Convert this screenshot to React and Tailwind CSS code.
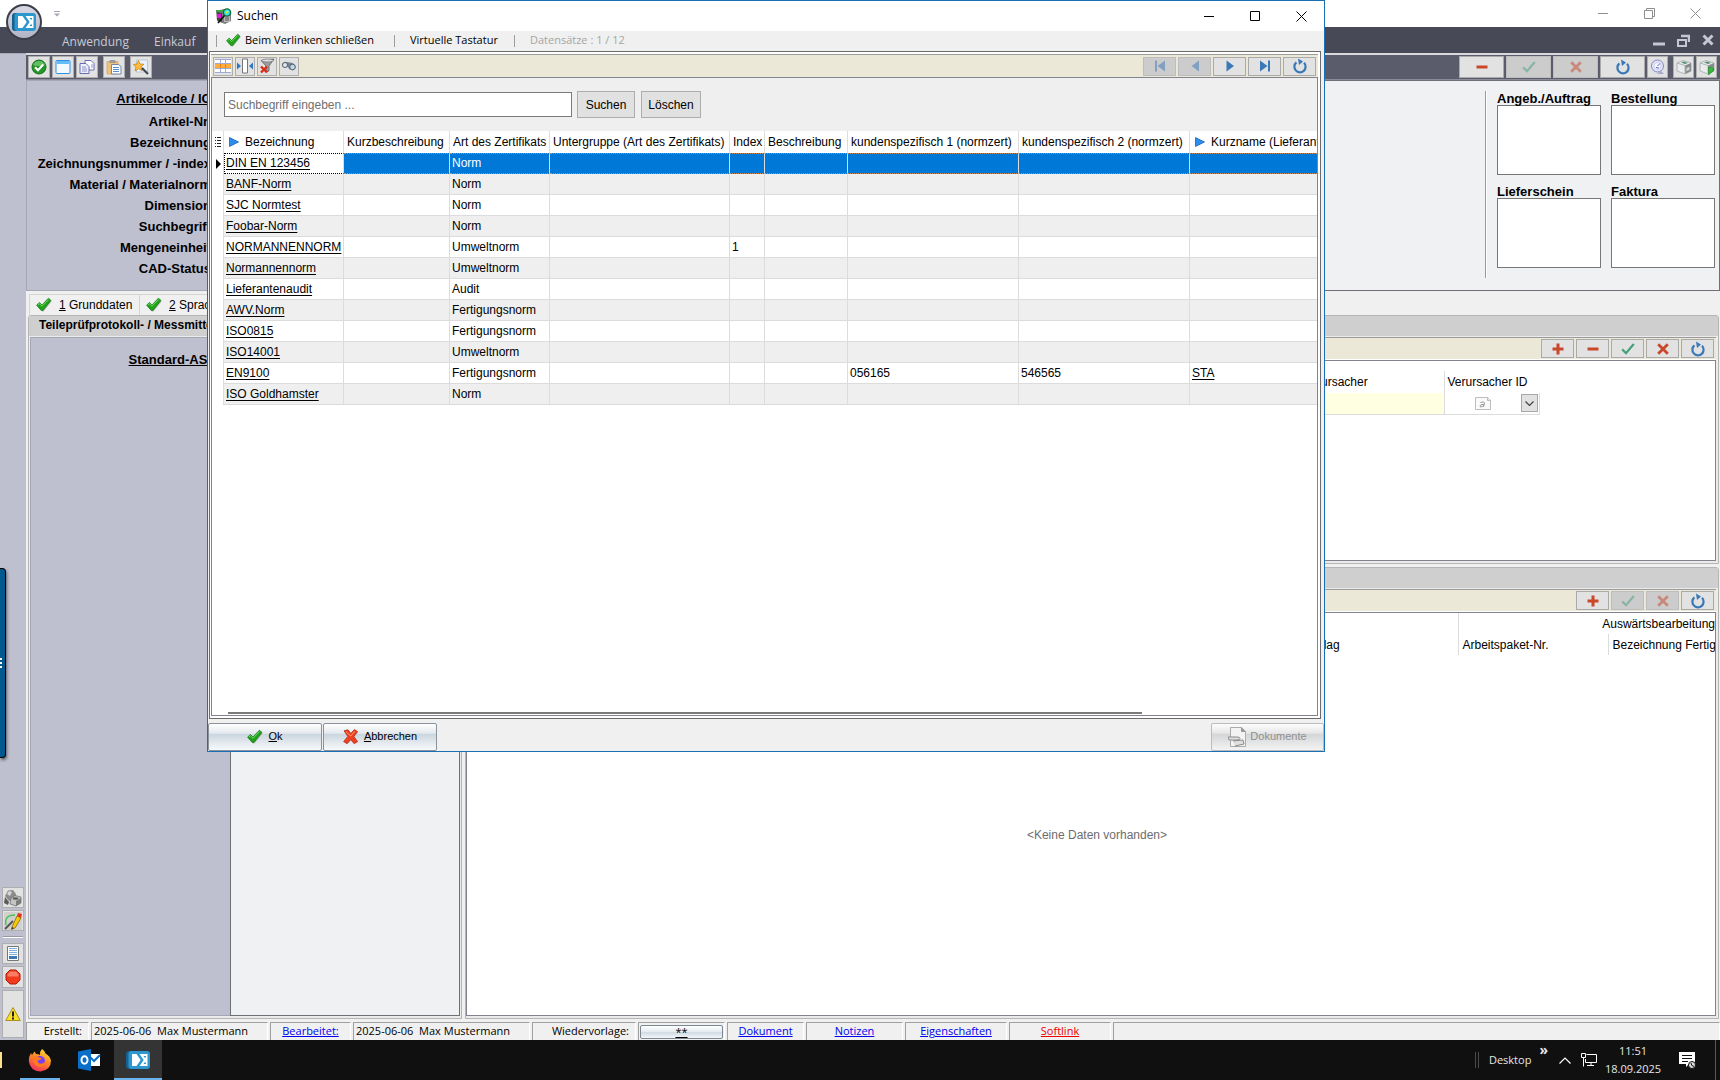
import { clsx } from 'clsx';

const COLUMNS = [
  { label: 'Bezeichnung', width: 'w-[120px]', link: true },
  { label: 'Kurzbeschreibung', width: 'w-[106px]' },
  { label: 'Art des Zertifikats', width: 'w-[100px]' },
  { label: 'Untergruppe (Art des Zertifikats)', width: 'w-[180px]' },
  { label: 'Index', width: 'w-[35px]' },
  { label: 'Beschreibung', width: 'w-[83px]' },
  { label: 'kundenspezifisch 1 (normzert)', width: 'w-[171px]' },
  { label: 'kundenspezifisch 2 (normzert)', width: 'w-[171px]' },
  { label: 'Kurzname (Lieferant)', width: '', link: true },
];

const ROWS = [
  ['DIN EN 123456', '', 'Norm', '', '', '', '', '', ''],
  ['BANF-Norm', '', 'Norm', '', '', '', '', '', ''],
  ['SJC Normtest', '', 'Norm', '', '', '', '', '', ''],
  ['Foobar-Norm', '', 'Norm', '', '', '', '', '', ''],
  ['NORMANNENNORM', '', 'Umweltnorm', '', '1', '', '', '', ''],
  ['Normannennorm', '', 'Umweltnorm', '', '', '', '', '', ''],
  ['Lieferantenaudit', '', 'Audit', '', '', '', '', '', ''],
  ['AWV.Norm', '', 'Fertigungsnorm', '', '', '', '', '', ''],
  ['ISO0815', '', 'Fertigungsnorm', '', '', '', '', '', ''],
  ['ISO14001', '', 'Umweltnorm', '', '', '', '', '', ''],
  ['EN9100', '', 'Fertigungsnorm', '', '', '', '056165', '546565', 'STA'],
  ['ISO Goldhamster', '', 'Norm', '', '', '', '', '', ''],
];

const FIELD_LABELS = [
  'Artikel-Nr.',
  'Bezeichnung',
  'Zeichnungsnummer / -index',
  'Material / Materialnorm',
  'Dimension',
  'Suchbegriff',
  'Mengeneinheit',
  'CAD-Status',
];

const LINK_BOXES = ['Angeb./Auftrag', 'Bestellung', 'Lieferschein', 'Faktura'];

/* ---------- icons ---------- */

function GreenCheck({ className = 'w-4 h-4' }) {
  return (
    <svg viewBox="0 0 16 16" className={className}>
      <path d="M1.5 9.2 4.2 6.6 6.6 9 13 2.4l2.6 2L7.6 14.4H6.2z" fill="#9a9a9a" opacity=".6" />
      <path d="M.6 8.2 3.4 5.4 6 8 12.4 1.2 15 3.4 7 13.4H5.2z" fill="#22a31c" stroke="#137a10" strokeWidth=".7" />
      <path d="M2 8 3.5 6.6 6 9.2 12.5 2.6" fill="none" stroke="#6fd860" strokeWidth="1" />
    </svg>
  );
}

function RedCross({ className = 'w-4 h-4' }) {
  return (
    <svg viewBox="0 0 16 16" className={className}>
      <path d="M3 2.4 6 2l2.4 3.6L12 1.6l2.8 1.6-3.6 5 3.4 5-3 1.600-3.400-4-3.600 4.400-2.800-1.800 3.800-5.200z" fill="#8d8d8d" opacity=".6" />
      <path d="M1 1.800 5 .8l2.800 3.600L11.400.6l3.200 2-3.800 4.800 3.800 5.200-3.600 2-3.200-4L4 14.600l-3.400-2 4.200-5.200z" fill="#ee4020" stroke="#b3230c" strokeWidth=".7" />
      <path d="M3 2.8 7.8 7l4-4.600" fill="none" stroke="#ff9a7a" strokeWidth="1" />
    </svg>
  );
}

function Glyph({ kind }) {
  const blue = '#3a78b8';
  return (
    <svg viewBox="0 0 16 16" className="w-4 h-4">
      {kind === 'first' && <path d="M3 2.5h2v11H3zM13 2.5v11L5.5 8z" fill={blue} />}
      {kind === 'prev' && <path d="M12 2.5v11L4.5 8z" fill={blue} />}
      {kind === 'next' && <path d="M4.5 2.5v11L12 8z" fill={blue} />}
      {kind === 'last' && <path d="M3 2.5v11L10.5 8zM11 2.5h2v11h-2z" fill={blue} />}
      {kind === 'reload' && (
        <>
          <path d="M12 4.800a5.600 5.600 0 1 1-7.600-.4" fill="none" stroke={blue} strokeWidth="2.2" />
          <path d="M6 .6 11 3.400 7 7z" fill={blue} />
        </>
      )}
      {kind === 'plus' && <path d="M6.5 2.5h3v4h4v3h-4v4h-3v-4h-4v-3h4z" fill="#c9472b" />}
      {kind === 'minus' && <path d="M2.5 6.5h11v3h-11z" fill="#c9472b" />}
      {kind === 'check' && <path d="M2.2 8.4 6 12.2 13.8 3" fill="none" stroke="#46a07c" strokeWidth="2.2" />}
      {kind === 'cross' && <path d="M3.2 3.2l9.6 9.6M12.8 3.2l-9.6 9.6" stroke="#c9472b" strokeWidth="2.8" />}
    </svg>
  );
}

function BrandMark({ className }) {
  return (
    <svg viewBox="0 0 24 20" className={className}>
      <rect x="0" y="1" width="14" height="18" rx="3" fill="#17618f" />
      <rect x="2.500" y="1" width="21.500" height="18" rx="3" fill="#2a97cf" />
      <path d="M6 4h4.500l4.200 6-4.200 6H6z" fill="#fff" />
      <path d="M13.500 4H21.500v12h-8l4.200-6z" fill="#fff" />
      <path d="M17.500 6h2.500v1.500h-1.500zM17.500 14h2.500v-1.500h-1.500z" fill="#2a97cf" />
    </svg>
  );
}

function WindowMark({ kind, className = 'w-[11px] h-[11px]' }) {
  return (
    <svg viewBox="0 0 11 11" className={className} fill="none" stroke="currentColor">
      {kind === 'min' && <path d="M0 5.500h10" />}
      {kind === 'max' && <path d="M.5.5h9v9h-9z" />}
      {kind === 'restore' && <path d="M.5 2.500h8v8h-8zM2.500 2.500v-2h8v8h-2" />}
      {kind === 'close' && <path d="M.5.5l10 10M10.500.5l-10 10" />}
    </svg>
  );
}

function LinkArrow() {
  return (
    <svg viewBox="0 0 10 10" className="w-[10px] h-[10px] shrink-0">
      <path d="M.5.5 9.500 5 .5 9.500z" fill="#2b8df0" stroke="#1763b8" strokeWidth=".8" />
    </svg>
  );
}

function PrinterBox({ play }) {
  return (
    <svg viewBox="0 0 16 16" className="w-4 h-4">
      <path d="M1 4 7 1.500 15 4v8l-6 3-8-3z" fill="#e9ecec" stroke="#9aa0a0" strokeWidth=".7" />
      <path d="M9 6.500 15 4v8l-6 3z" fill="#858a8a" />
      <path d="M1 4l8 2.500V15" fill="none" stroke="#b0b5b5" />
      <path d="M5 3.500l3-1 4 1.500-3 1z" fill="#57906f" />
      <path d="M10.500 9l3-1.200v3l-3 1.400z" fill="#d6d6d6" />
      {play && <path d="M9.500 8v8l5-4.500V9z" fill="#37b83b" stroke="#1e8222" strokeWidth=".6" />}
    </svg>
  );
}

/* ---------- small building blocks ---------- */

function IconButton({ label, className, children }) {
  return (
    <button
      type="button"
      aria-label={label}
      className={clsx('flex items-center justify-center shrink-0 bg-[#e2e2e2] border border-[#aeaeae]', className)}
    >
      {children}
    </button>
  );
}

function NavButton({ kind, disabled, wide }) {
  return (
    <button
      type="button"
      aria-label={kind}
      disabled={disabled}
      className={clsx(
        'flex items-center justify-center shrink-0 border',
        wide ? 'w-[45px] h-[22px]' : 'w-[33px] h-[19px]',
        disabled ? 'bg-[#cccccc] border-[#bdbdbd]' : 'bg-[#e2e2e2] border-[#aaaaaa]',
      )}
    >
      <span className={clsx('flex', disabled && 'opacity-50')}><Glyph kind={kind} /></span>
    </button>
  );
}

function GlossButton({ className, disabled, children }) {
  return (
    <button
      type="button"
      disabled={disabled}
      className={clsx(
        'flex items-center justify-center h-7 border rounded-[2px] text-[11px] pb-px',
        disabled
          ? 'border-[#bcbcbc] text-[#909090] bg-[linear-gradient(#fdfdfd,#e6e6e8_36%,#d3d5d7_38%,#f3f3f3)]'
          : 'border-[#8c929b] bg-[linear-gradient(#fefefe,#e4e9ee_36%,#c9d5de_38%,#f8fafb)]',
        className,
      )}
    >
      {children}
    </button>
  );
}

function Panel({ className, buttons, children }) {
  return (
    <section className={clsx('flex flex-col min-h-0 rounded-t-[3px] border border-[#b5b5b5] bg-[#ebebeb] pr-[2px] pb-[2px]', className)}>
      <div className="h-5 -mr-[2px] shrink-0 bg-[#cfcfcf]" />
      <div className="mt-px h-[23px] shrink-0 flex items-center justify-end gap-[2px] pr-[2px] bg-[#ece8d8] border-t border-[#9b9b9b] border-b border-b-white">
        {buttons}
      </div>
      <div className="flex-1 min-h-0 flex flex-col overflow-hidden bg-white border border-[#82838f]">{children}</div>
    </section>
  );
}

/* ---------- main window ---------- */

function TitleBar() {
  return (
    <header className="h-[27px] shrink-0 flex items-center justify-end bg-white text-[#8e8e8e] pr-[2px]">
      <svg viewBox="0 0 6 6" className="w-[6px] h-[6px] mr-auto ml-[54px]">
        <path d="M0 .5h6" stroke="#a5a6b3" />
        <path d="M0 2.500h6L3 5.500z" fill="#a5a6b3" />
      </svg>
      {['min', 'restore', 'close'].map(k => (
        <button key={k} type="button" aria-label={k} className="w-[46px] h-6 flex items-center justify-center">
          <WindowMark kind={k} />
        </button>
      ))}
    </header>
  );
}

function MenuBar() {
  return (
    <nav className="h-[26px] shrink-0 flex items-center bg-[#474957] text-[#c9cad6] font-['Open_Sans',sans-serif] text-xs pl-[62px] pr-[6px]">
      <a href="#anwendung" className="w-[92px] pt-[3px]">Anwendung</a>
      <a href="#einkauf" className="pt-[3px]">Einkauf</a>
      <div className="ml-auto flex items-center gap-3">
        <svg viewBox="0 0 12 12" className="w-3 h-3"><path d="M0 8.500h12v3H0z" fill="#c5c6d6" /></svg>
        <svg viewBox="0 0 13 13" className="w-[13px] h-[13px]" fill="none" stroke="#c5c6d6">
          <path d="M1 6h8v6H1z" strokeWidth="2" />
          <path d="M4 2h8v6" strokeWidth="2.500" />
        </svg>
        <svg viewBox="0 0 12 12" className="w-3 h-3"><path d="M1.500 1.500l9 9M10.500 1.500l-9 9" stroke="#c5c6d6" strokeWidth="3" /></svg>
      </div>
    </nav>
  );
}

function Sidebar() {
  return (
    <aside className="w-[26px] shrink-0 flex flex-col justify-end items-center gap-[2px] pb-[2px] bg-[#bebfcf] border-t border-[#a9a9b5]">
      <IconButton label="Teile" className="w-[22px] h-[21px]">
        <svg viewBox="0 0 18 18" className="w-[18px] h-[18px]">
          <path d="M1 7 4 1.500 9 1l3 4-1 5-6 2z" fill="#8b8b8b" />
          <path d="M3 5 5 2l3 1-2 4z" fill="#d6d6d6" />
          <path d="M1 8l4 5-1 3-4-2z" fill="#5c5c5c" />
          <path d="M7 9l4-2.500 6 1.500v6l-5 3-6-2z" fill="#c4c4c4" stroke="#666" strokeWidth=".7" />
          <ellipse cx="11.500" cy="9.500" rx="3" ry="1.300" fill="#5d5d5d" />
          <path d="M12 12l5-3v5l-5 3z" fill="#7d7d7d" />
        </svg>
      </IconButton>
      <IconButton label="Zeichnen" className="w-[22px] h-[21px]">
        <svg viewBox="0 0 18 18" className="w-[18px] h-[18px]">
          <path d="M0 0h18v18H0z" fill="#cfd0cf" />
          <path d="M2 13Q0 3 11 3" fill="none" stroke="#4bc353" strokeWidth="1.500" />
          <path d="M1 17 9 9" stroke="#555" strokeWidth="2" />
          <path d="M8 15 13 4l4 2-6 10-3 1z" fill="#f6c90e" stroke="#8f6a00" strokeWidth=".8" />
          <path d="M13 4l1-3 4 1-1 4z" fill="#e0321c" />
          <path d="M8 15l2 1-3 2z" fill="#333" />
        </svg>
      </IconButton>
      <div className="w-5 h-[2px] my-[3px] border-t border-[#9a9aa6] bg-white" />
      <IconButton label="Liste" className="w-[22px] h-[21px]">
        <svg viewBox="0 0 12 15" className="w-3 h-[15px] shrink-0">
          <path d="M.5.5h11v14H.5z" fill="#fff" stroke="#777" />
          <path d="M2 2.500h8M2 4.500h8M2 6.500h8M2 8.500h8" stroke="#7fb0dd" />
          <path d="M2 10h8v3H2z" fill="#3f79b8" />
        </svg>
      </IconButton>
      <IconButton label="Stopp" className="w-[22px] h-[22px]">
        <svg viewBox="0 0 16 16" className="w-4 h-4">
          <path d="M5 1h6l4 4v6l-4 4H5l-4-4V5z" fill="#f33a1c" stroke="#a81f0a" />
          <path d="M5 2.500h6l2.500 3v2h-11v-2z" fill="#ff9a82" opacity=".7" />
        </svg>
      </IconButton>
      <IconButton label="Warnung" className="w-[22px] h-12">
        <svg viewBox="0 0 16 16" className="w-4 h-4">
          <path d="M8 1.500 15.300 14.500H.7z" fill="#f7df2b" stroke="#a38a10" strokeWidth=".9" strokeLinejoin="round" />
          <path d="M8 5.500v5" stroke="#222" strokeWidth="2" />
          <path d="M8 11.500v2" stroke="#222" strokeWidth="2" />
        </svg>
      </IconButton>
    </aside>
  );
}

function MainToolbar() {
  return (
    <div className="h-[27px] shrink-0 flex items-center bg-[#5a5c6c] border-t-2 border-[#d9d9de] border-b border-b-[#8b8c97] pl-[2px] pr-[3px]">
      <div className="flex gap-[2px]">
        <IconButton label="Bestätigen" className="w-[22px] h-[22px]">
          <svg viewBox="0 0 16 16" className="w-4 h-4">
            <circle cx="8" cy="8" r="7" fill="#23962a" stroke="#17711c" />
            <path d="M2 6a6.500 6.500 0 0 1 12 0Q8 8 2 6z" fill="#7dd07e" opacity=".7" />
            <path d="M4 8.200 7 11.200 12.200 5.400" fill="none" stroke="#fff" strokeWidth="2.200" />
          </svg>
        </IconButton>
        <IconButton label="Fenster" className="w-[22px] h-[22px]">
          <svg viewBox="0 0 16 16" className="w-4 h-4">
            <rect x="1" y="1.500" width="14" height="13" rx="1" fill="#f4f9ff" stroke="#2f8fe0" />
            <path d="M1.500 2h13v3h-13z" fill="#66bdf5" />
          </svg>
        </IconButton>
        <IconButton label="Kopieren" className="w-[22px] h-[22px]">
          <svg viewBox="0 0 16 16" className="w-4 h-4">
            <path d="M6 1.500h6l3 3V11H6z" fill="#fff" stroke="#6a6db5" />
            <path d="M1 4.500h6l3 3V14.500H1z" fill="#eef1ff" stroke="#6a6db5" />
            <path d="M3 8h4M3 10h5M3 12h5M12 6h2M12 8h2" stroke="#8f94cc" />
          </svg>
        </IconButton>
      </div>
      <IconButton label="Einfügen" className="w-[22px] h-[22px] ml-[5px]">
        <svg viewBox="0 0 16 16" className="w-4 h-4">
          <path d="M1 2.500h11V15H1z" fill="#efc27a" stroke="#d19a48" strokeWidth=".6" />
          <path d="M4 1h5l1 3H3z" fill="#9b9b9b" />
          <path d="M5.500 5.500h7l2.500 2V15H5.500z" fill="#fff" stroke="#6f87a8" />
          <path d="M7 8.500h6M7 10.500h6M7 12.500h6" stroke="#5d8fc4" />
        </svg>
      </IconButton>
      <IconButton label="Assistent" className="w-[22px] h-[22px] ml-[5px]">
        <svg viewBox="0 0 16 16" className="w-4 h-4">
          <path d="M3.500 1h11v12h-11z" fill="#eaf2fb" stroke="#a8b8cc" strokeWidth=".7" />
          <path d="M5.500 1.500 7 5l4 .2-3 2.600 1.200 4L5.600 9.700 2 12l1-4L.5 5.500l3.500-.4z" fill="#ffbe3b" stroke="#c67b10" strokeWidth=".7" />
          <path d="M9 9l6 6" stroke="#3d4a58" strokeWidth="2.200" />
        </svg>
      </IconButton>
      <div className="ml-auto flex gap-[2px]">
        <NavButton kind="minus" wide />
        <NavButton kind="check" wide disabled />
        <NavButton kind="cross" wide disabled />
        <NavButton kind="reload" wide />
        <IconButton label="Verlauf" className="w-[21px] h-[22px]">
          <svg viewBox="0 0 16 16" className="w-4 h-4">
            <circle cx="7.500" cy="7" r="6" fill="#e3e6fb" stroke="#8487c2" />
            <circle cx="7.500" cy="7" r="3.500" fill="#f6f7ff" stroke="#b4b6e0" strokeWidth=".6" />
            <path d="M7.500 7 10 4.500M6 8.500l3 .5" stroke="#6468ad" />
            <path d="M11 12l3 3H7z" fill="#a6a8c9" />
          </svg>
        </IconButton>
        <IconButton label="Drucken" className="w-[21px] h-[22px] ml-[3px]"><PrinterBox /></IconButton>
        <IconButton label="Druck starten" className="w-[21px] h-[22px]"><PrinterBox play /></IconButton>
      </div>
    </div>
  );
}

function RecordHeader() {
  return (
    <div className="h-[211px] shrink-0 flex">
      <div className="w-[204px] shrink-0 bg-[#bebfcf] border border-[#a6a7b6] pt-[7px] text-[13px] font-bold whitespace-nowrap">
        <div className="w-[184px] text-right">
          <a href="#artikelcode" className="block underline leading-[21px] mb-[2px]">Artikelcode / IC</a>
          {FIELD_LABELS.map(label => (
            <div key={label} className="leading-[21px]">{label}</div>
          ))}
        </div>
      </div>
      <div className="flex-1 flex justify-end bg-[#eff1f3] border border-[#6f7077] pt-[10px] pr-1">
        <div className="h-[187px] w-[2px] mr-[10px] border-l border-[#9a9a9a] bg-white" />
        <div className="grid grid-cols-2 gap-x-[10px] content-start text-[13px] font-bold">
          {LINK_BOXES.map(label => (
            <label key={label} className="block h-[93px]">
              <span className="block h-[14px] leading-[15px]">{label}</span>
              <textarea className="block w-[104px] h-[70px] bg-white border border-[#777777] resize-none" />
            </label>
          ))}
        </div>
      </div>
    </div>
  );
}

function TabStrip() {
  return (
    <div className="h-6 shrink-0 flex items-end bg-[#f0f0f0] pl-[3px] text-xs whitespace-nowrap">
      <button type="button" className="h-[21px] w-[111px] flex items-center gap-[7px] pl-[6px] border border-[#d5d5d5] border-b-0">
        <GreenCheck /> <span><u>1</u> Grunddaten</span>
      </button>
      <button type="button" className="h-[21px] w-[111px] flex items-center gap-[7px] pl-[6px] border border-[#d5d5d5] border-b-0 border-l-0">
        <GreenCheck /> <span><u>2</u> Sprachen</span>
      </button>
    </div>
  );
}

function CausePanel() {
  return (
    <Panel
      className="h-[249px] shrink-0"
      buttons={['plus', 'minus', 'check', 'cross', 'reload'].map(k => <NavButton key={k} kind={k} />)}
    >
      <table className="mt-[10px] w-[1073px] table-fixed text-xs text-left">
        <thead>
          <tr className="h-[22px]">
            <th className="w-[836px]" aria-label="Position" />
            <th className="font-normal w-[141px]">Verursacher</th>
            <th className="font-normal pl-[3px] border-l border-[#dcdcdc]">Verursacher ID</th>
          </tr>
        </thead>
        <tbody>
          <tr className="h-[21px]">
            <td className="bg-[#ffffe1] border-b border-[#dcdcdc]" />
            <td className="bg-[#ffffe1] border-b border-[#dcdcdc]" />
            <td className="border border-t-0 border-[#dcdcdc] p-0">
              <div className="flex items-center justify-end gap-[30px] pr-px">
                <svg viewBox="0 0 16 13" className="w-4 h-[13px]">
                  <path d="M.5.5h12l3 3v9H.5z" fill="#fafafa" stroke="#bdbdbd" />
                  <path d="M12.500.5v3h3" fill="none" stroke="#bdbdbd" />
                  <path d="M5.500 5.500q4-1.500 4 .5l-1 4M9 7.500q-4-.5-4 1.500t3.600-.3" fill="none" stroke="#9a9a9a" />
                </svg>
                <div className="relative flex">
                  <select aria-label="Verursacher ID" className="appearance-none w-[17px] h-[18px] bg-[#e1e1e1] border border-[#a8a8a8] text-transparent">
                    <option />
                  </select>
                  <svg viewBox="0 0 9 5" className="absolute left-1 top-[7px] w-[9px] h-[5px] pointer-events-none">
                    <path d="M.5.5l4 4 4-4" fill="none" stroke="#444" strokeWidth="1.200" />
                  </svg>
                </div>
              </div>
            </td>
          </tr>
        </tbody>
      </table>
    </Panel>
  );
}

function WorkPanel() {
  return (
    <Panel
      className="flex-1"
      buttons={(
        <>
          <NavButton kind="plus" />
          <NavButton kind="check" disabled />
          <NavButton kind="cross" disabled />
          <NavButton kind="reload" />
        </>
      )}
    >
      <table className="w-full table-fixed text-xs text-left whitespace-nowrap">
        <colgroup>
          <col />
          <col className="w-[172px]" />
          <col className="w-[150px]" />
          <col className="w-[106px]" />
        </colgroup>
        <thead>
          <tr className="h-[21px]">
            <th colSpan={2} aria-label="Auftrag" />
            <th colSpan={2} className="font-normal text-right border-l border-[#dcdcdc]">Auswärtsbearbeitung</th>
          </tr>
          <tr className="h-[21px]">
            <th aria-label="Position" />
            <th className="font-normal">Vorschlag</th>
            <th className="font-normal pl-[3px] border-l border-[#dcdcdc]">Arbeitspaket-Nr.</th>
            <th className="font-normal pl-[3px] border-l border-[#dcdcdc] overflow-hidden">Bezeichnung Fertigung</th>
          </tr>
        </thead>
      </table>
      <p className="flex-1 flex items-center justify-center pl-3 text-xs text-[#6d6d6d]">&lt;Keine Daten vorhanden&gt;</p>
    </Panel>
  );
}

function StatusBar() {
  const cell = 'h-[18px] flex items-center border-l border-t border-[#a0a0a0] border-r border-r-white';
  return (
    <footer className="h-[21px] shrink-0 flex items-end gap-[2px] bg-[#f0f0f0] font-['Open_Sans',sans-serif] text-[11px] whitespace-pre">
      <div className={clsx(cell, 'w-[63px] justify-end pr-[6px]')}>Erstellt:</div>
      <div className={clsx(cell, 'w-[177px] pl-[2px]')}>2025-06-06  Max Mustermann</div>
      <div className={clsx(cell, 'w-[81px] justify-center')}><a href="#bearbeitet" className="text-[#0000ee] underline">Bearbeitet:</a></div>
      <div className={clsx(cell, 'w-[177px] pl-[2px]')}>2025-06-06  Max Mustermann</div>
      <div className={clsx(cell, 'w-[104px] justify-end pr-[6px]')}>Wiedervorlage:</div>
      <div className={clsx(cell, 'w-[87px] justify-center')}>
        <button type="button" className="w-[83px] h-[14px] leading-3 underline border border-[#7d8793] rounded-[2px] bg-[linear-gradient(#ffffff,#e4eaf0_50%,#cfdae3_52%,#f4f7f9)]">**</button>
      </div>
      <div className={clsx(cell, 'w-[77px] justify-center')}><a href="#dokument" className="text-[#0000ee] underline">Dokument</a></div>
      <div className={clsx(cell, 'w-[97px] justify-center')}><a href="#notizen" className="text-[#0000ee] underline">Notizen</a></div>
      <div className={clsx(cell, 'w-[102px] justify-center')}><a href="#eigenschaften" className="text-[#0000ee] underline">Eigenschaften</a></div>
      <div className={clsx(cell, 'w-[102px] justify-center')}><a href="#softlink" className="text-[#ee0000] underline">Softlink</a></div>
      <div className={clsx(cell, 'flex-1')} />
    </footer>
  );
}

function TaskBar() {
  return (
    <footer className="h-10 shrink-0 flex items-center bg-[#101010] text-[#e6e6e6] font-['Open_Sans',sans-serif] text-[11px]">
      <div className="w-[2px] h-4 mr-[18px] bg-[#ffe08a]" />
      <button type="button" aria-label="Firefox" className="w-10 h-10 flex items-center justify-center border-b-2 border-t-2 border-t-transparent border-[#6cb4ee]">
        <svg viewBox="0 0 24 24" className="w-6 h-6">
          <defs>
            <linearGradient id="fox" x1=".8" y1="0" x2=".3" y2="1">
              <stop offset="0" stopColor="#ffe73f" />
              <stop offset=".45" stopColor="#ff8a24" />
              <stop offset="1" stopColor="#f0305f" />
            </linearGradient>
          </defs>
          <path d="M14 1q3 2 3.500 4.500Q22 8 23 12.500 23 22 12.500 23.500 2 23 .8 13q0-5 2.200-8L4 7l2.500-3.500L8 6q2.500 0 4 1Q11.500 3.500 14 1z" fill="url(#fox)" />
          <circle cx="12" cy="13" r="5" fill="#7a3ff0" />
          <path d="M4 9q4-2 7 .5l3 .8q-2 2.200-4 1.900-1 2 1.500 3.300 4 1 6-2.500Q17 19 12 19 5 18.500 4 9z" fill="#ff7a20" />
        </svg>
      </button>
      <button type="button" aria-label="Outlook" className="w-[54px] h-10 flex items-center justify-center pl-1">
        <svg viewBox="0 0 24 24" className="w-6 h-6">
          <path d="M12 6h11v12H12z" fill="#fff" />
          <path d="M13 9l4 4 6-6" fill="none" stroke="#0a6fc9" strokeWidth="2" />
          <path d="M1 3.500 14 1v22L1 20.500z" fill="#0a6fc9" />
          <ellipse cx="7.500" cy="12" rx="3" ry="3.800" fill="none" stroke="#fff" strokeWidth="2" />
        </svg>
      </button>
      <button type="button" aria-label="ERP" className="w-12 h-10 flex items-center justify-center bg-[#343434] border-b-2 border-t-2 border-t-[#343434] border-[#6cb4ee]">
        <BrandMark className="w-6 h-5" />
      </button>
      <div className="ml-auto w-1 h-4 border-x border-[#4a4a4a]" />
      <span className="ml-[10px] text-[11px]">Desktop</span>
      <span className="ml-2 pb-5 text-sm leading-4 font-bold">»</span>
      <svg viewBox="0 0 12 7" className="w-3 h-[7px] ml-[11px]"><path d="M.5 6.500 6 1l5.500 5.500" fill="none" stroke="#fff" strokeWidth="1.200" /></svg>
      <svg viewBox="0 0 16 14" className="w-4 h-[14px] ml-[10px]" fill="none" stroke="#fff">
        <path d="M5.500 1.500h10v8h-11V6M10 9.500v3M6 12.500h7M.5.5h4v4h-4zM2.500 4.500v9" />
      </svg>
      <div className="w-[72px] text-center leading-[18px]">11:51<br />18.09.2025</div>
      <svg viewBox="0 0 17 17" className="w-[17px] h-[17px] ml-[10px] mr-[19px]">
        <path d="M0 0h16v12h-6l-3 3v-3H0z" fill="#fff" />
        <path d="M3 3.500h10M3 6.500h10M3 9.500h6" stroke="#101010" />
        <circle cx="13" cy="13" r="3.500" fill="#ddd" stroke="#101010" />
        <path d="M12 11q0 3 3 3.500" fill="none" stroke="#101010" />
      </svg>
      <div className="h-10 w-[5px] border-l border-[#5a5a5a]" />
    </footer>
  );
}

/* ---------- search dialog ---------- */

function ResultTable() {
  return (
    <table className="w-full table-fixed text-xs text-left whitespace-nowrap border-separate border-spacing-0">
      <colgroup>
        <col className="w-3" />
        {COLUMNS.map(c => <col key={c.label} className={c.width} />)}
      </colgroup>
      <thead>
        <tr className="h-[22px]">
          <th className="border-r border-[#dcdcdc] p-0">
            <svg viewBox="0 0 6 10" className="w-[6px] h-[10px] ml-[3px]">
              <path d="M0 .5h1M2 .5h4M0 3.500h1M2 3.500h4M0 6.500h1M2 6.500h4M0 9.500h1M2 9.500h4" stroke="#222" />
            </svg>
          </th>
          {COLUMNS.map(c => (
            <th key={c.label} className={clsx('font-normal p-0 overflow-hidden border-r border-[#dcdcdc] last:border-r-0', c.link ? 'pl-[5px]' : 'pl-[3px]')}>
              {c.link ? <span className="flex items-center gap-[6px]"><LinkArrow />{c.label}</span> : c.label}
            </th>
          ))}
        </tr>
      </thead>
      <tbody>
        {ROWS.map((row, r) => (
          <tr key={row[0]} className="h-[21px]">
            <td className="p-0 bg-white border-r border-[#dcdcdc]">
              {r === 0 && <svg viewBox="0 0 5 10" className="w-[5px] h-[10px] ml-1"><path d="M0 0l5 5-5 5z" /></svg>}
            </td>
            {row.map((value, c) => (
              <td
                key={COLUMNS[c].label}
                className={clsx(
                  'p-0 pl-[2px] overflow-hidden border-r border-b border-[#dcdcdc] last:border-r-0',
                  r === 0 && 'pb-[2px]',
                  r === 0 && c > 0 && 'bg-[#0078d7] text-white border-y border-y-[#c98a5a] [border-top-style:dotted] [border-bottom-style:dotted]',
                  r === 0 && c === 0 && 'border-y border-l border-y-black border-l-black [border-top-style:dotted] [border-bottom-style:dotted] [border-left-style:dotted] pl-px',
                  r % 2 === 1 && 'bg-[#efefef]',
                )}
              >
                {COLUMNS[c].link && value ? <a href="#norm" className="underline underline-offset-2">{value}</a> : value}
              </td>
            ))}
          </tr>
        ))}
      </tbody>
    </table>
  );
}

function SearchDialog() {
  return (
    <div
      role="dialog"
      aria-label="Suchen"
      className="absolute top-0 left-[207px] right-[395px] bottom-[328px] flex flex-col bg-[#f0f0f0] border border-[#1a6fb5]"
    >
      <div className="h-[30px] shrink-0 flex items-center bg-white pl-2 font-['Open_Sans',sans-serif] text-xs">
        <svg viewBox="0 0 16 16" className="w-4 h-4 mr-[5px]">
          <path d="M0 3 8 1l7 3v9l-6 3-8-3z" fill="#7d7d7d" />
          <path d="M1 4l5 1v9l-5-2z" fill="#444" />
          <path d="M1 6h4v4H1z" fill="#e019d8" />
          <path d="M0 2h7v2H0z" fill="#3fa34a" />
          <path d="M8 8h6v6H8z" fill="#b9b9b9" />
          <path d="M9 10h4M9 12h4" stroke="#555" />
          <circle cx="11" cy="4.500" r="3.600" fill="#35e4e6" stroke="#0d6b39" strokeWidth="1.400" />
          <path d="M10 5l2-2" stroke="#fff200" strokeWidth="1.500" />
          <path d="M8.500 7.500 2 15" stroke="#111" strokeWidth="1.600" />
        </svg>
        Suchen
        <div className="ml-auto flex">
          {['min', 'max', 'close'].map(k => (
            <button key={k} type="button" aria-label={k} className="w-[46px] h-[28px] flex items-center justify-center">
              <WindowMark kind={k} />
            </button>
          ))}
        </div>
      </div>

      <div className="h-5 shrink-0 flex items-center pl-2 pb-px font-['Open_Sans',sans-serif] text-[11px]">
        <span className="w-px h-3 bg-[#9c9c9c]" />
        <button type="button" className="flex items-center gap-1 ml-[9px] w-[168px]">
          <GreenCheck className="w-[15px] h-[15px]" /> Beim Verlinken schließen
        </button>
        <span className="w-px h-3 bg-[#9c9c9c]" />
        <button type="button" className="ml-[15px] w-[104px] text-left">Virtuelle Tastatur</button>
        <span className="w-px h-3 bg-[#9c9c9c]" />
        <span className="ml-[15px] text-[#a5a5a5]">Datensätze : 1 / 12</span>
      </div>

      <div className="flex-1 min-h-0 ml-px mr-[3px] flex flex-col bg-white border border-[#6c6c6c] pt-[2px] pl-px pr-[2px] pb-[2px]">
        <div className="h-[23px] shrink-0 flex items-center bg-[#ece8d8] border-t border-[#9b9b9b] pl-[2px] pr-[2px]">
          <div className="flex gap-[2px]">
            <IconButton label="Tabelle" className="w-5 h-[19px]">
              <svg viewBox="0 0 16 14" className="w-4 h-[14px]">
                <path d="M0 0h16v14H0z" fill="#fff" />
                <path d="M0 4.500h16v5H0z" fill="#ffab3d" />
                <path d="M0 4.500h16M0 9.500h16M5.500 0v14M10.500 0v14M0 .5h16M0 13.500h16" stroke="#a3a9d6" />
                <path d="M5.500 5v4M10.500 5v4" stroke="#e8830c" />
              </svg>
            </IconButton>
            <IconButton label="Spaltenbreite" className="w-5 h-[19px]">
              <svg viewBox="0 0 18 16" className="w-[18px] h-4">
                <path d="M6.500 1h5v14h-5z" fill="#fff" stroke="#777" />
                <path d="M1 4.500 5 8l-4 3.500zM17 4.500 13 8l4 3.500z" fill="#2f77c4" />
              </svg>
            </IconButton>
            <IconButton label="Filter löschen" className="w-5 h-[19px]">
              <svg viewBox="0 0 16 16" className="w-4 h-4">
                <path d="M2 2.500 15 1 10 8v5l-3 1V8z" fill="#9d9d9d" stroke="#555" strokeWidth=".7" />
                <ellipse cx="8.500" cy="2.500" rx="6" ry="1.500" fill="#ddd" stroke="#666" strokeWidth=".6" />
                <path d="M2 8.500l6 6M8 8.500l-6 6" stroke="#dd2a16" strokeWidth="2.400" />
              </svg>
            </IconButton>
            <IconButton label="Suchen" className="w-5 h-[19px]">
              <svg viewBox="0 0 16 16" className="w-4 h-4">
                <path d="M1 6q2-3 5-2l6 1 3 4-3 3.500-4-1.500-1-2-3 .5q-3 0-3-3.500z" fill="#77838e" />
                <circle cx="4" cy="7" r="2.500" fill="#dfe9f0" stroke="#56616c" />
                <circle cx="11.500" cy="9" r="2.800" fill="#bcd7ea" stroke="#56616c" />
              </svg>
            </IconButton>
          </div>
          <div className="ml-auto flex gap-[2px]">
            <NavButton kind="first" disabled />
            <NavButton kind="prev" disabled />
            <NavButton kind="next" />
            <NavButton kind="last" />
            <NavButton kind="reload" />
          </div>
        </div>

        <div className="flex-1 min-h-0 flex flex-col overflow-hidden bg-white border border-[#82838f]">
          <form className="h-[53px] shrink-0 flex items-start bg-[#efefef] pl-3 pt-[13px] text-xs">
            <input
              type="text"
              aria-label="Suchbegriff"
              placeholder="Suchbegriff eingeben ..."
              className="w-[348px] h-[25px] mt-px px-[3px] bg-white border border-[#7a7a7a] placeholder:text-[#6f6f6f]"
            />
            <button type="button" className="w-[58px] h-[27px] ml-[5px] bg-[#e1e1e1] border border-[#adadad]">Suchen</button>
            <button type="button" className="w-[60px] h-[27px] ml-[6px] bg-[#e1e1e1] border border-[#adadad]">Löschen</button>
          </form>
          <ResultTable />
          <div className="mt-auto mb-px ml-4 mr-[175px] h-[2px] bg-[#7a7a7a]" />
        </div>
      </div>

      <div className="h-8 shrink-0 flex items-end gap-px">
        <GlossButton className="w-[114px] gap-[5px]"><GreenCheck /><span><u>O</u>k</span></GlossButton>
        <GlossButton className="w-[114px] gap-[5px]"><RedCross /><span><u>A</u>bbrechen</span></GlossButton>
        <GlossButton disabled className="w-[113px] gap-1 ml-auto">
          <svg viewBox="0 0 18 20" className="w-[18px] h-5">
            <path d="M2.500.5h11l4 4v15h-15z" fill="#f3f3f3" stroke="#ababab" />
            <path d="M13.500.5v4h4" fill="#999" stroke="#999" />
            <path d="M0 10h9q3 0 3 1.500T9 13H2q-2 0-2-3zM5 14l10-1 1 4-9 2" fill="#e0e0e0" stroke="#8a8a8a" />
          </svg>
          Dokumente
        </GlossButton>
      </div>
    </div>
  );
}

export default function App() {
  return (
    <div className="relative h-screen flex flex-col overflow-hidden bg-[#f0f0f0] text-black font-['Liberation_Sans',Arial,sans-serif]">
      <TitleBar />
      <MenuBar />
      <div className="absolute left-[6px] top-1 w-9 h-9 rounded-full flex items-center justify-center border-2 border-[#3c3e4a] bg-[linear-gradient(#d8d9e3,#b2b4c6)]">
        <BrandMark className="w-6 h-5" />
      </div>

      <div className="relative flex-1 min-h-0 flex">
        <Sidebar />
        <main className="flex-1 min-w-0 flex flex-col">
          <MainToolbar />
          <RecordHeader />
          <TabStrip />
          <div className="flex-1 min-h-0 flex gap-[3px] pl-[2px]">
            <section className="w-[434px] shrink-0 flex flex-col rounded-t-[3px] border border-[#b5b5b5] bg-[#ebebeb]">
              <h2 className="h-5 shrink-0 pl-[10px] leading-[19px] bg-[#cfcfcf] text-xs font-bold">Teileprüfprotokoll- / Messmittel</h2>
              <div className="flex-1 flex mt-px ml-px mr-px mb-[2px]">
                <div className="w-[200px] shrink-0 bg-[#bebfcf] border border-[#a6a7b6] border-r-0 pt-[11px]">
                  <a href="#asp" className="block w-[187px] pr-[2px] text-right text-[13px] leading-[21px] font-bold underline">Standard-ASP</a>
                </div>
                <div className="flex-1 bg-[#eff1f3] border border-[#6f7077]" />
              </div>
            </section>
            <div className="flex-1 min-w-0 flex flex-col gap-[3px] pr-px">
              <CausePanel />
              <WorkPanel />
            </div>
          </div>
          <StatusBar />
        </main>
        {/* collapsed side drawer, sticks out over the sidebar */}
        <button
          type="button"
          aria-label="Seitenleiste öffnen"
          className="absolute left-0 top-[515px] w-[6px] h-[190px] flex items-center bg-[#00588f] border border-l-0 border-black rounded-r-[4px] shadow-[1px_2px_3px_rgba(0,0,0,0.5)]"
        >
          <span className="flex flex-col gap-[2px]">
            <span className="w-[2px] h-[2px] bg-white" />
            <span className="w-[2px] h-[2px] bg-white" />
            <span className="w-[2px] h-[2px] bg-white" />
          </span>
        </button>
      </div>

      <TaskBar />
      <SearchDialog />
    </div>
  );
}
